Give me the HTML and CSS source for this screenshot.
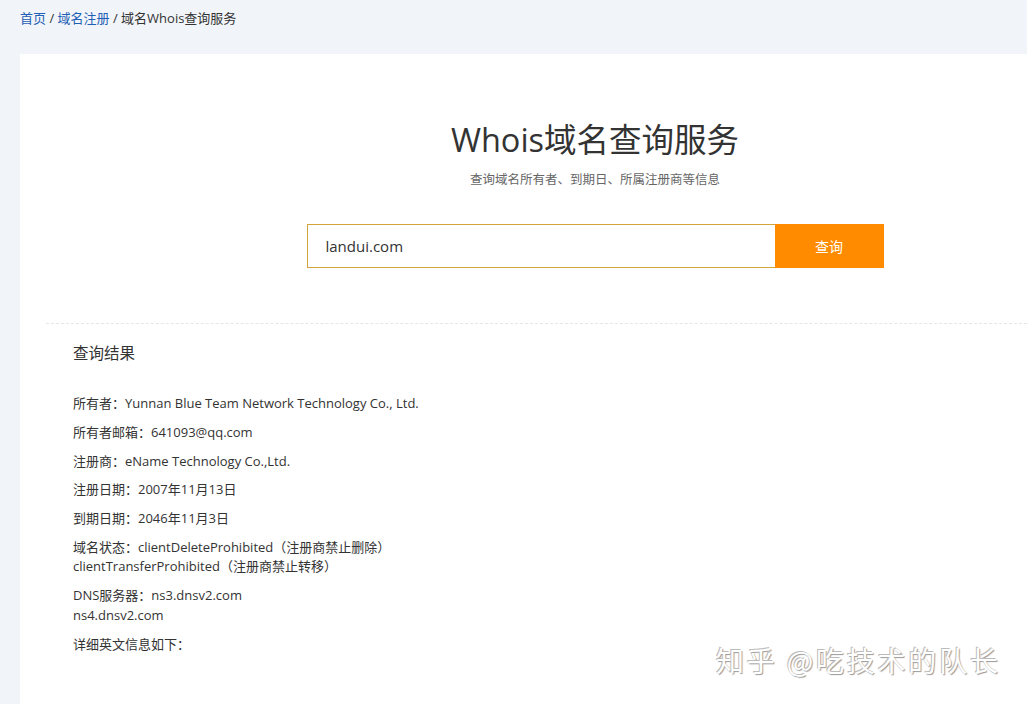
FILE: index.html
```html
<!DOCTYPE html>
<html lang="zh">
<head>
<meta charset="utf-8">
<title>域名Whois查询服务</title>
<link rel="stylesheet" href="styles.css">
</head>
<body>
<div class="crumb">
  <a href="#">首页</a> / <a href="#">域名注册</a> / <span>域名Whois查询服务</span>
</div>
<main class="panel">
  <section class="hero">
    <h1 class="title">Whois域名查询服务</h1>
    <p class="subtitle">查询域名所有者、到期日、所属注册商等信息</p>
    <form class="search">
      <input class="search-input" type="text" value="landui.com">
      <button class="search-btn" type="button">查询</button>
    </form>
  </section>
  <section class="result">
    <h2 class="result-title">查询结果</h2>
    <ul class="result-list">
      <li>所有者：Yunnan Blue Team Network Technology Co., Ltd.</li>
      <li>所有者邮箱：641093@qq.com</li>
      <li>注册商：eName Technology Co.,Ltd.</li>
      <li>注册日期：2007年11月13日</li>
      <li>到期日期：2046年11月3日</li>
      <li>域名状态：clientDeleteProhibited（注册商禁止删除）<br>clientTransferProhibited（注册商禁止转移）</li>
      <li>DNS服务器：ns3.dnsv2.com<br>ns4.dnsv2.com</li>
      <li>详细英文信息如下：</li>
    </ul>
  </section>
</main>
<div class="watermark">知乎 @吃技术的队长</div>
</body>
</html>
```
FILE: styles.css
```css
html, body {
  margin: 0;
  padding: 0;
}
body {
  background: #f1f4f9;
  font-family: "Open Sans", "Noto Sans CJK SC", sans-serif;
  color: #333;
  width: 1027px;
  height: 704px;
  overflow: hidden;
  position: relative;
  display: flex;
  flex-direction: column;
}
.crumb {
  padding: 9px 20px 0;
  height: 54px;
  flex: none;
  box-sizing: border-box;
  font-size: 13px;
  line-height: 18px;
  color: #333;
}
.crumb a {
  color: #1f5fb5;
  text-decoration: none;
}
.panel {
  margin-left: 20px;
  flex: 1;
  min-height: 0;
  background: #fff;
  overflow: hidden;
}
.hero {
  padding: 66px 0 0 143px;
  display: flex;
  flex-direction: column;
  align-items: center;
}
.title {
  margin: 0;
  font-size: 32.5px;
  line-height: 40px;
  font-weight: 400;
  color: #333;
  font-family: "Open Sans", "Noto Sans CJK SC", sans-serif;
}
.subtitle {
  margin: 10px 0 0;
  font-size: 12.5px;
  line-height: 20px;
  color: #666;
}
.search {
  margin-top: 34px;
  display: flex;
  width: 577px;
  height: 44px;
}
.search-input {
  width: 468px;
  height: 44px;
  box-sizing: border-box;
  border: 1px solid #d4a43c;
  border-right: none;
  padding: 0 18px;
  font-family: "Open Sans", "Noto Sans CJK SC", sans-serif;
  font-size: 15px;
  color: #333;
  outline: none;
}
.search-btn {
  width: 109px;
  height: 44px;
  border: none;
  background: #ff8c00;
  color: #fff;
  font-family: "Noto Sans CJK SC", sans-serif;
  font-size: 14px;
  padding: 0;
}
.result {
  margin: 55px 0 0 26px;
  border-top: 1px dashed #e3e6ea;
  padding: 19px 0 0 27px;
}
.result-title {
  margin: 0;
  font-size: 15.5px;
  line-height: 20px;
  font-weight: 400;
  color: #333;
}
.result-list {
  list-style: none;
  margin: 31px 0 0;
  padding: 0;
  font-size: 13px;
  line-height: 19.5px;
  color: #333;
}
.result-list li {
  margin-bottom: 9.3px;
}
.watermark {
  position: absolute;
  left: 716px;
  top: 641px;
  font-family: "Noto Sans CJK SC", sans-serif;
  font-size: 28px;
  line-height: 38px;
  color: #fff;
  letter-spacing: 2.8px;
  white-space: nowrap;
  text-shadow: -1px -1px 0 #bbb, 1px 1px 1px #999;
}
```
